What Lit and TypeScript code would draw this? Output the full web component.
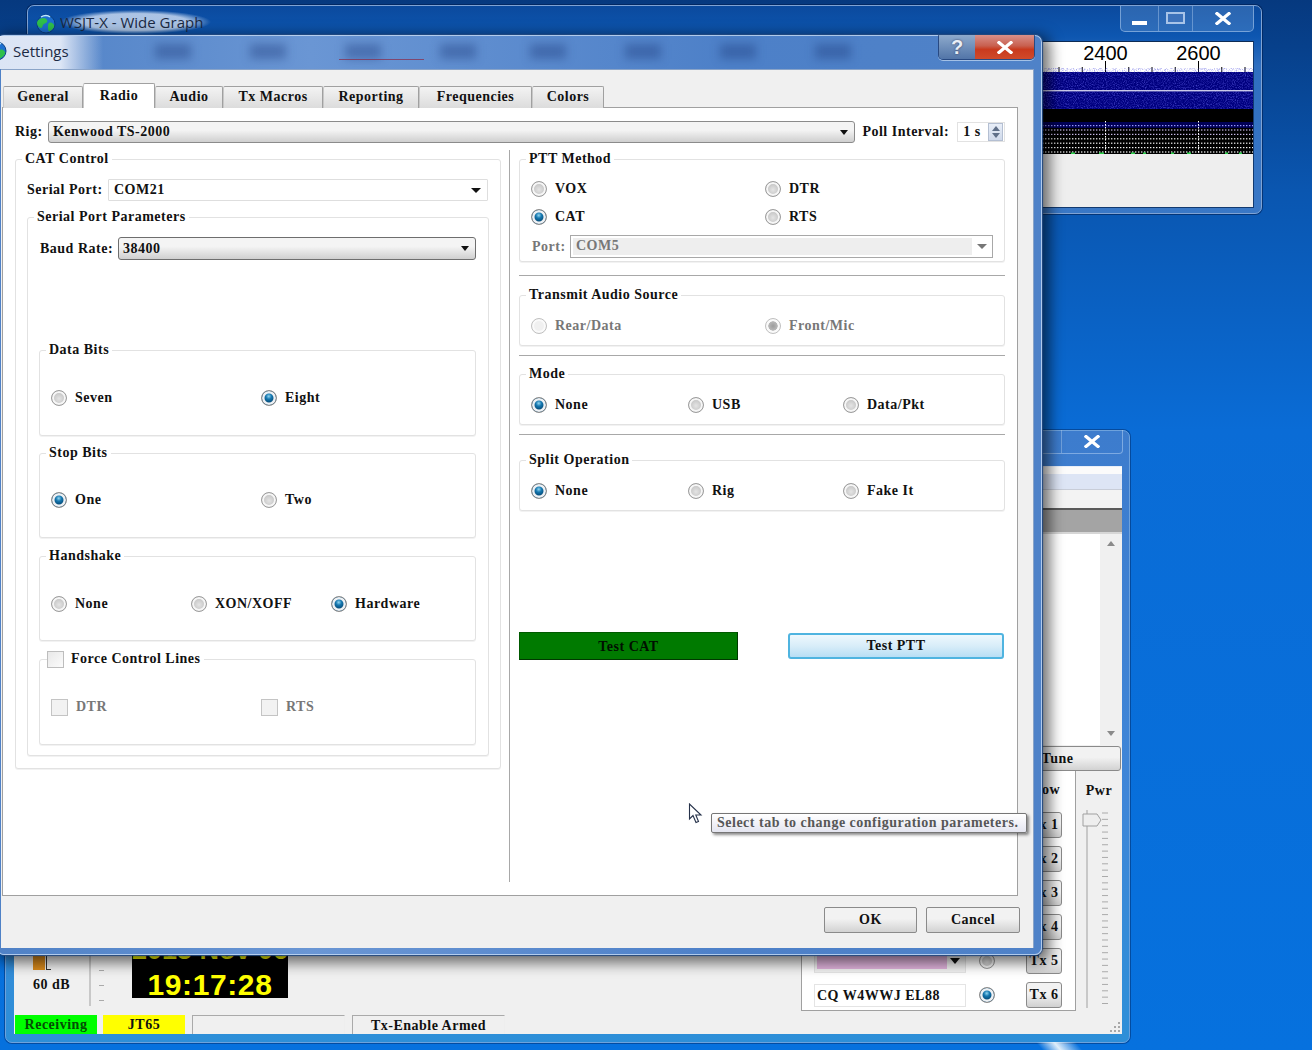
import { LitElement, html, css, svg } from "lit";
import { customElement } from "lit/decorators.js";

const radio = (label: string, on = false, dis = false) => html`
  <label class="opt ${dis ? "dis" : ""}"><i class="radio ${on ? "on" : ""}"></i><span>${label}</span></label>`;
const check = (label: string, dis = false) => html`
  <label class="opt ${dis ? "dis" : ""}"><i class="check"></i><span>${label}</span></label>`;
const globe = svg`<svg class="globe" width="20" height="20" viewBox="0 0 20 20"><circle cx="10" cy="10" r="9" fill="#1c6fd0" stroke="#0c3f80"/><path d="M4 5c3-2 6-1 7 1s-1 3-3 4-1 4-3 4-4-3-4-5 1-3 3-4zM13 9c2-1 4 0 5 2s-2 5-4 6-2-2-2-4 0-3 1-4z" fill="#2fc04a"/><path d="M5 3c3-2 7-2 9 0" fill="none" stroke="#bfe8ff" stroke-width="1.5"/></svg>`;
const closeX = svg`<svg width="16" height="13" viewBox="0 0 16 13"><path d="M2 1.5 L14 11.5 M14 1.5 L2 11.5" stroke="#fff" stroke-width="3.2" stroke-linecap="square" fill="none"/></svg>`;
const tabs: [string, number, boolean][] = [
  ["General", 80, false], ["Radio", 72, true], ["Audio", 68, false], ["Tx Macros", 100, false],
  ["Reporting", 96, false], ["Frequencies", 113, false], ["Colors", 72, false],
];
const ghosts = [170, 265, 360, 455, 545, 640, 735, 830];

@customElement("app-root")
export class AppRoot extends LitElement {
  static styles = css`
    :host { display: block; width: 1312px; height: 1050px; overflow: hidden; position: relative;
      font: bold 14px/16px "Liberation Serif", serif; letter-spacing: .5px; color: #111; white-space: nowrap;
      background: linear-gradient(180deg, #06397f 0, #0a56b0 190px, #0a6cd6 430px, #0671de 100%); }
    .win { position: absolute; box-sizing: border-box; border-radius: 7px; }
    .sans { font-family: "Open Sans", "Liberation Sans", sans-serif; font-weight: 400; letter-spacing: 0; }

    /* wide graph */
    .wide { left: 27px; top: 5px; width: 1235px; height: 209px; padding: 35px 7px 5px 7px;
      background: linear-gradient(180deg, #0b4a9e, #0d56b0 30px, #2f6fc0 60px, #3a78c6);
      border: 1px solid #7fa3d4; box-shadow: 0 0 0 1px rgba(0,30,80,.6); display: flex; flex-direction: column; }
    .wide .tbar { display: flex; align-items: center; gap: 4px; height: 35px; margin: -35px 0 0 0; color: #1b2a44; font-size: 15px; padding-left: 1px; }
    .glow { background: radial-gradient(closest-side, rgba(225,235,250,.75) 70%, rgba(200,220,250,0)); padding: 4px 8px 4px 0; margin-top: -3px; }
    .wctl { margin-left: auto; margin-top: -10px; margin-right: 0; display: flex; height: 25px; border: 1px solid rgba(190,215,245,.5); border-top: 0; border-radius: 0 0 5px 5px; background: rgba(120,165,220,.3); }
    .wctl b { display: flex; align-items: center; justify-content: center; border-right: 1px solid rgba(190,215,245,.4); }
    .wctl b:last-child { border-right: 0; }
    .wb1 { width: 37px; } .wb2 { width: 33px; } .wb3 { width: 60px; }
    .wb1::after { content: ""; width: 15px; height: 4px; margin-top: 10px; background: #fff; }
    .wb2::after { content: ""; width: 15px; height: 8px; border: 2px solid #a8c4e8; background: rgba(70,120,190,.7); }
    .wclient { flex: 1; background: #eeeeee; border: 1px solid #123a70; border-top: 1px solid #0d2b55; display: flex; justify-content: flex-end; overflow: hidden; }
    .fall { display: block; align-self: flex-start; }
    .fall text { font-weight: 400; letter-spacing: 0; }

    /* main */
    .main { left: 5px; top: 430px; width: 1125px; height: 613px; padding: 35px 7px 8px 8px;
      background: linear-gradient(180deg, #3d7ccd, #3f86d8 60%, #2d8fd8);
      border: 1px solid #6ea2dc; box-shadow: 0 0 0 1px rgba(0,40,100,.5); display: flex; flex-direction: column; }
    .mtop { height: 0; display: flex; justify-content: flex-end; }
    .mctl { margin: -36px -1px 0 0; height: 23px; display: flex; border: 1px solid rgba(190,215,245,.5); border-top: 0; border-radius: 0 0 4px 4px; }
    .mctl b { display: flex; align-items: center; justify-content: center; }
    .mb2 { width: 50px; border-right: 1px solid rgba(190,215,245,.4); } .mb3 { width: 60px; }
    .mclient { flex: 1; background: #f0f0f0; display: flex; flex-direction: column; border-top: 1px solid #e8eef8; min-height: 0; }
    .s1 { height: 7px; background: #fbfbfb; } .s2 { height: 15px; background: #dde5f5; border-bottom: 1px solid #c8cdd8; }
    .s3 { height: 18px; background: #f3f3f3; border-bottom: 2px solid #5a5a5a; }
    .s4 { height: 22px; background: #a4a4a4; border-bottom: 2px solid #d6d6d6; }
    .list { height: 211px; background: #fff; display: flex; justify-content: flex-end; }
    .sb { width: 22px; background: #f0f0f0; display: flex; flex-direction: column; justify-content: space-between; align-items: center; padding: 7px 0 9px; box-sizing: border-box; }
    .ua, .da { display: block; width: 0; height: 0; border: 4px solid transparent; }
    .ua { border-bottom: 5px solid #8a8a8a; border-top: 0; } .da { border-top: 5px solid #8a8a8a; border-bottom: 0; }
    .tune { height: 25px; margin: 1px 1px 0 500px; border: 1px solid #8a8a8a; border-radius: 3px; box-sizing: border-box;
      background: linear-gradient(#f2f2f2 45%, #d2d2d2); display: flex; align-items: center; justify-content: center; }
    .tune span { margin-left: 480px; }
    .lower { flex: 1; display: flex; min-height: 0; }
    .lleft { flex: 1; display: flex; align-items: flex-end; padding: 0 0 10px 19px; }
    .meter { width: 56px; display: flex; flex-direction: column; align-items: flex-start; }
    .mbar { display: block; width: 12px; height: 14px; background: #d98a1c; margin-bottom: 7px; position: relative; }
    .mbar::after { content: ""; position: absolute; left: 13px; top: 0; width: 4px; height: 13px; border-left: 1px solid #333; border-bottom: 1px solid #333; }
    .db { margin-bottom: 13px; }
    .vl { display: block; width: 2px; height: 56px; background: #c8c8c8; margin-right: 8px; }
    .tk { display: flex; flex-direction: column; gap: 14px; width: 33px; margin-bottom: 5px; }
    .tk i { display: block; width: 5px; height: 1px; background: #aaa; }
    .clock { width: 156px; height: 62px; background: #000; color: #ffff00; font: bold 30px/26px "Liberation Sans", sans-serif; letter-spacing: .6px; text-align: center; margin-bottom: 8px; display: flex; flex-direction: column; justify-content: flex-end; }
    .clock span { display: block; }
    .clock .date { font-size: 27px; line-height: 28px; margin-bottom: 8px; letter-spacing: 0; }
    .txg { width: 275px; height: 240px; box-sizing: border-box; background: #fff; border: 1px solid #a0a0a0; border-top: 0; padding-right: 13px; display: flex; flex-direction: column; flex-shrink: 0; }
    .txg .hd { height: 37px; flex-shrink: 0; text-align: right; padding: 11px 2px 0 0; box-sizing: border-box; }
    .txr { height: 34px; display: flex; align-items: center; justify-content: flex-end; flex-shrink: 0; }
    .txr .radio { margin: 0 31px 0 13px; }
    .inp { width: 152px; height: 23px; border: 1px solid #e4e4e4; box-sizing: border-box; padding: 3px 0 0 2px; background: #fff; }
    .lil { display: flex; align-items: center; justify-content: space-between; background: #f2f2f2; padding: 0 5px 0 2px; }
    .lil b { display: block; width: 130px; height: 15px; background: #e2b4de; }
    .lil::after { content: ""; width: 0; height: 0; border: 5px solid transparent; border-top: 6px solid #111; border-bottom: 0; }
    .txb { width: 36px; height: 26px; border: 1px solid #8a8a8a; border-radius: 3px; box-sizing: border-box;
      background: linear-gradient(#f2f2f2 45%, #d0d0d0); text-align: center; line-height: 24px; }
    .pwr { width: 46px; flex-shrink: 0; padding-top: 12px; text-align: center; display: flex; flex-direction: column; align-items: center; }
    .pwr svg { margin-top: 9px; }
    .status { display: flex; gap: 6px; height: 19px; padding-left: 1px; margin-top: -1px; align-items: stretch; }
    .st { width: 82px; text-align: center; box-sizing: border-box; line-height: 19px; }
    .green { background: #00ff00; color: #044d04; } .yellow { background: #ffff00; }
    .sunk { width: 153px; border-top: 1px solid #aaa; border-left: 1px solid #aaa; border-right: 1px solid #eee; margin-left: 1px; }
    .grip { margin: auto 0 0 auto; }

    /* dialog */
    .dlg { left: -3px; top: 35px; width: 1045px; height: 920px; padding: 33px 7px 0 3px;
      background: linear-gradient(90deg, #4f81c6, #6a96d4 30%, #4d80c8 70%, #4f82c8);
      border: 1px solid rgba(200,220,245,.8); box-shadow: 0 0 1px 1px #234a80, 4px 4px 14px 4px rgba(0,0,0,.55); }
    .dtitle { height: 33px; margin: -33px 0 0 0; display: flex; align-items: flex-start; position: relative; }
    .dtitle .t { display: flex; align-items: center; gap: 6px; font-size: 15px; color: #1b2a44; height: 30px; padding-bottom: 3px; margin-left: -4px; padding-right: 34px; overflow: hidden;
      background: linear-gradient(90deg, rgba(235,240,250,.9) 60%, rgba(235,240,250,0)); position: relative; }
    .dtitle .t svg { margin-left: -10px; }
    .blur { position: absolute; top: 8px; height: 15px; width: 36px; background: rgba(25,55,120,.38); filter: blur(5px); }
    .redl { position: absolute; left: 338px; top: 23px; width: 85px; height: 1px; background: rgba(140,40,70,.7); filter: blur(.6px); }
    .dbtns { position: absolute; right: -1px; top: -1px; height: 24px; display: flex; border: 1px solid rgba(25,50,100,.7); border-top: 0; border-radius: 0 0 5px 5px; overflow: hidden; box-shadow: 0 1px 0 rgba(220,235,250,.6); }
    .qb { width: 36px; display: flex; align-items: center; justify-content: center; background: linear-gradient(#8eaacc, #6f8fba 50%, #5275a8); color: #e8eef6; font: bold 20px/20px "Liberation Sans", sans-serif; letter-spacing: 0; text-shadow: 0 0 2px #335; }
    .xb { width: 59px; display: flex; align-items: center; justify-content: center; background: linear-gradient(#d9908a, #c8604f 45%, #c93a1e 60%, #d04a2a); }
    .client { height: 879px; background: #f0f0f0; display: flex; flex-direction: column; padding: 13px 15px 0 1px; box-sizing: border-box; border: 1px solid #8aa4c8; border-width: 1px 1px 0 0; }
    .tabs { display: flex; height: 25px; align-items: flex-end; padding-left: 1px; position: relative; z-index: 1; margin-bottom: -1px; flex-shrink: 0; }
    .tab { box-sizing: border-box; height: 22px; border: 1px solid #a0a0a0; border-bottom: 0; text-align: center; line-height: 20px;
      background: linear-gradient(#f3f3f3, #dcdcdc); border-radius: 2px 2px 0 0; border-left-color: #c8c8c8; }
    .tab.sel { height: 25px; background: #fff; line-height: 24px; }
    .pane { height: 789px; box-sizing: border-box; background: #fff; border: 1px solid #a0a0a0; padding: 12px 12px 0 12px; flex-shrink: 0; }
    .rigrow { display: flex; height: 22px; align-items: center; padding-top: 1px; margin-bottom: -1px; }
    .rigrow .lbl { width: 33px; }
    .cb { box-sizing: border-box; display: flex; align-items: center; justify-content: space-between; padding: 0 5px 0 4px; }
    .cb::after { content: ""; width: 0; height: 0; border: 4px solid transparent; border-top: 5px solid #111; border-bottom: 0; flex-shrink: 0; margin-right: 1px; }
    .flat { border: 1px solid #dedede; background: #fff; border-radius: 1px; padding-left: 5px; }
    .flat::after { border-width: 5px; border-bottom: 0; }
    .raised { border: 1px solid #8b8b8b; border-radius: 3px; background: linear-gradient(#f4f4f4 40%, #cfcfcf); }
    .dark { border-color: #6e6e6e; }
    .rig { width: 810px; height: 22px; margin-right: 7px; }
    .spin { width: 48px; height: 20px; border: 1px solid #e2e2e2; box-sizing: border-box; display: flex; justify-content: space-between; margin-left: 8px; padding: 0 1px 0 5px; line-height: 18px; }
    .sbtn { width: 15px; display: flex; flex-direction: column; align-items: center; justify-content: space-around; background: linear-gradient(#e8eef8, #cfd9ea); border: 1px solid #b4bfd2; padding: 1px 0; box-sizing: border-box; }
    .sbtn .ua { border-bottom-color: #5f6f88; } .sbtn .da { border-top-color: #5f6f88; }
    .cols { display: grid; grid-template-columns: 486px 18px 486px; }
    .sep { display: block; background: #a8a8a8; height: 732px; margin: 8px 9px 0 8px; width: 1px; box-sizing: border-box; }
    .colr { display: flex; flex-direction: column; }
    .group { border: 1px solid #e2e2e2; border-radius: 3px; box-sizing: border-box; background: #fff; box-shadow: 0 1px 0 #f2f2f2; }
    .lg { display: block; width: max-content; height: 16px; margin: -9px 0 0 -5px; padding: 0 3px; background: #fff; }
    .lgc { display: flex; align-items: center; gap: 7px; margin-left: -4px; padding-left: 0; }
    .cat { margin-top: 17px; height: 610px; padding: 0 11px; }
    .row { display: flex; align-items: center; }
    .serial { margin-top: 12px; height: 22px; }
    .serial .lbl { width: 81px; }
    .serial .cb { width: 380px; height: 22px; }
    .spp { margin-top: 16px; height: 539px; padding: 0 11px; }
    .baud { margin-top: 12px; height: 23px; padding-left: 1px; }
    .baud .lbl { width: 78px; }
    .baud .cb { width: 358px; height: 23px; }
    .sub { height: 86px; width: 437px; padding-left: 11px; }
    .sd { margin-top: 90px; } .ss { margin-top: 17px; height: 85px; } .sh { margin-top: 18px; height: 85px; } .sf { margin-top: 18px; }
    .g2 { display: grid; grid-template-columns: 210px 210px; }
    .g3 { display: grid; grid-template-columns: 140px 140px 140px; }
    .m32 { margin-top: 32px; } .m31 { margin-top: 31px; }
    .opt { display: flex; align-items: center; height: 16px; gap: 8px; }
    .dis { color: #777; }
    .radio { display: block; width: 16px; height: 16px; box-sizing: border-box; border-radius: 50%; border: 1px solid #9c9c9c; flex-shrink: 0;
      background: radial-gradient(circle at 50% 55%, #e4e4e4, #b0b0b0); box-shadow: inset 0 0 0 2px #f6f6f6; }
    .radio.on { background: radial-gradient(circle at 48% 38%, #8fd4f0 0, #1678b0 25%, #044a78 55%); border-color: #8a8a8a; box-shadow: inset 0 0 0 2.5px #eef1f4; }
    .dis .radio { border-color: #c0c0c0; background: #f0f0f0; box-shadow: inset 0 0 0 2px #fafafa; }
    .dis .radio.on { background: radial-gradient(circle, #9c9c9c 0, #b8b8b8 45%, #f2f2f2 50%); }
    .check { display: block; width: 17px; height: 17px; box-sizing: border-box; border: 1px solid #bdbdbd; background: linear-gradient(135deg, #e8e8e8, #fbfbfb); flex-shrink: 0; }
    .dis .check { background: #f2f2f2; border-color: #c4c4c4; }
    .ptt { margin-top: 17px; height: 103px; padding-left: 11px; }
    .gp { display: grid; grid-template-columns: 234px 234px; }
    .m15 { margin-top: 15px; } .m14 { margin-top: 14px; } .m12 { margin-top: 12px; } .m10 { margin-top: 10px; }
    .port { padding-left: 1px; color: #777; }
    .port .lbl { width: 38px; }
    .port .cb { width: 423px; height: 23px; border: 1px solid #a8a8a8; background: #fff; padding: 2px 0 2px 2px; }
    .port .cb::after { border-top: 5px solid #777; border-width: 5px; border-bottom: 0; margin: 0 5px; }
    .port .in { flex: 1; background: #eee; height: 100%; padding-left: 3px; line-height: 15px; }
    .hr { height: 1px; background: #a8a8a8; margin-top: 13px; }
    .mid { height: 51px; padding-left: 11px; }
    .gm { display: grid; grid-template-columns: 157px 155px 100px; }
    .h9 { margin-top: 9px; }
    .mt19 { margin-top: 19px; } .mt18 { margin-top: 18px; } .mt25 { margin-top: 25px; }
    .tests { display: flex; align-items: center; gap: 50px; margin-top: 121px; }
    .tcat { width: 219px; height: 28px; background: #007a00; border: 1px solid #005a00; border-right-color: #003800; border-bottom-color: #003800; box-sizing: border-box; text-align: center; line-height: 27px; color: #001000; }
    .tptt { width: 216px; height: 26px; box-sizing: border-box; border: 2px solid #4fb4e0; border-radius: 3px; background: linear-gradient(#eef8fd, #d8edf9 50%, #b8def4); text-align: center; line-height: 22px; }
    .foot { display: flex; justify-content: flex-end; gap: 9px; margin: 11px -2px 0 0; }
    .btn { height: 26px; box-sizing: border-box; border: 1px solid #8a8a8a; border-radius: 2px; background: linear-gradient(#f2f2f2 45%, #d2d2d2); text-align: center; line-height: 24px; }
    .ok { width: 93px; } .cancel { width: 94px; }
    .tip { position: absolute; left: 711px; top: 813px; height: 20px; width: 316px; box-sizing: border-box; border: 1px solid #767676; border-radius: 2px; background: linear-gradient(#fff, #e4e5f0); color: #575757; padding-left: 5px; line-height: 18px; box-shadow: 2px 2px 3px rgba(0,0,0,.45); }
    .cursor { position: absolute; left: 688px; top: 803px; }
    .streak { position: absolute; left: 1040px; top: 1042px; width: 40px; height: 10px; background: linear-gradient(90deg, transparent, #dfeefa 45%, transparent); transform: skewX(40deg); }
  `;

  private dots() {
    const out = [];
    for (let y = 0; y < 7; y++) {
      const c = y < 1 ? "#9a9aff" : y < 3 ? "#c9b9e8" : "#f2f2f2";
      for (let x = 1; x < 212; x += 3) out.push(svg`<rect x=${x} y=${83 + y * 4.4} width="1.4" height="1.2" fill=${c}/>`);
    }
    return out;
  }

  private ruler() {
    const ticks = [];
    for (let i = 0; i < 9; i++) {
      const x = 18 + i * 23.25;
      const long = i === 2 || i === 6;
      ticks.push(svg`<line x1=${x} x2=${x} y1=${long ? 19 : 25} y2="30" stroke="#000"/>`);
    }
    return ticks;
  }

  private fall() {
    return html`<svg class="fall" width="212" height="112" viewBox="0 0 212 112">
      <defs><filter id="n"><feTurbulence type="fractalNoise" baseFrequency="0.9" numOctaves="2" seed="3"/><feColorMatrix values="0 0 0 0 .1  0 0 0 0 .1  0 0 0 0 .75  0 0 0 1.6 -.7"/></filter></defs>
      <rect width="212" height="30" fill="#fff"/>
      ${this.ruler()}
      <text x="64.5" y="18" font-family="Liberation Sans" font-size="20" text-anchor="middle" fill="#000">2400</text>
      <text x="157.5" y="18" font-family="Liberation Sans" font-size="20" text-anchor="middle" fill="#000">2600</text>
      <rect y="30" width="212" height="37" fill="#00007f"/>
      <rect y="30" width="212" height="37" filter="url(#n)"/>
      <rect y="48" width="212" height="1.4" fill="#c8c8e8"/>
      <rect y="67" width="212" height="45" fill="#000"/>
      <rect y="80" width="212" height="6" fill="#00006a" opacity=".8"/>
      ${this.dots()}
      <line x1="64.5" x2="64.5" y1="79" y2="112" stroke="#fff" stroke-dasharray="1.5 1.5"/>
      <line x1="157.5" x2="157.5" y1="79" y2="112" stroke="#fff" stroke-dasharray="1.5 1.5"/>
      <path d="M30 111.3h4M58 111.3h5M90 111.3h4M102 111.3h3M130 111.3h3M146 111.3h4M184 111.3h3M198 111.3h3" stroke="#28d048" stroke-width="1.4"/>
    </svg>`;
  }

  private slider() {
    const t = [];
    for (let i = 0; i < 31; i++) t.push(svg`<line x1="20" x2="26" y1=${5 + i * 6.35} y2=${5 + i * 6.35} stroke="#aaa"/>`);
    return html`<svg width="34" height="205" viewBox="0 0 34 205">
      <rect x="4" y="2" width="2" height="198" fill="#c8c8c8"/>
      ${t}
      <path d="M1 6h14l4 6-4 6H1z" fill="#eee" stroke="#a0a0a0"/>
    </svg>`;
  }

  render() {
    return html`
      <section class="win wide">
        <div class="tbar">${globe}<span class="sans glow">WSJT-X - Wide Graph</span>
          <div class="wctl"><b class="wb1"></b><b class="wb2"></b><b class="wb3">${closeX}</b></div>
        </div>
        <div class="wclient">${this.fall()}</div>
      </section>

      <section class="win main">
        <div class="mtop"><div class="mctl"><b class="mb2"></b><b class="mb3">${closeX}</b></div></div>
        <div class="mclient">
          <div class="s1"></div><div class="s2"></div><div class="s3"></div><div class="s4"></div>
          <div class="list"><div class="sb"><i class="ua"></i><i class="da"></i></div></div>
          <div class="tune"><span>Tune</span></div>
          <div class="lower">
            <div class="lleft">
              <div class="meter"><i class="mbar"></i><span class="db">60 dB</span></div>
              <i class="vl"></i>
              <div class="tk"><i></i><i></i><i></i></div>
              <div class="clock"><span class="date">2015 Nov 06</span><span>19:17:28</span></div>
            </div>
            <div class="txg">
              <div class="hd">Now</div>
              ${[1, 2, 3, 4].map((n) => html`<div class="txr"><div class="txb">Tx ${n}</div></div>`)}
              <div class="txr"><div class="inp lil"><b></b></div><i class="radio"></i><div class="txb">Tx 5</div></div>
              <div class="txr"><div class="inp">CQ W4WWJ EL88</div><i class="radio on"></i><div class="txb">Tx 6</div></div>
            </div>
            <div class="pwr"><span>Pwr</span>${this.slider()}</div>
          </div>
          <div class="status">
            <div class="st green">Receiving</div><div class="st yellow">JT65</div>
            <div class="st sunk"></div><div class="st sunk">Tx-Enable Armed</div>
            <svg class="grip" width="14" height="14" viewBox="0 0 14 14" fill="#a8a8a8"><rect x="10" y="2" width="2" height="2"/><rect x="6" y="6" width="2" height="2"/><rect x="10" y="6" width="2" height="2"/><rect x="2" y="10" width="2" height="2"/><rect x="6" y="10" width="2" height="2"/><rect x="10" y="10" width="2" height="2"/></svg>
          </div>
        </div>
      </section>

      <section class="win dlg">
        <div class="dtitle">
          ${ghosts.map((x) => html`<i class="blur" style="left:${x - 16}px"></i>`)}
          <i class="redl"></i>
          <div class="t">${globe}<span class="sans">Settings</span></div>
          <div class="dbtns"><div class="qb">?</div><div class="xb">${closeX}</div></div>
        </div>
        <div class="client">
          <div class="tabs">
            ${tabs.map(([t, w, s]) => html`<div class="tab ${s ? "sel" : ""}" style="width:${w}px">${t}</div>`)}
          </div>
          <div class="pane">
            <div class="rigrow">
              <span class="lbl">Rig:</span>
              <div class="cb raised rig">Kenwood TS-2000</div>
              <span>Poll Interval:</span>
              <div class="spin"><span>1 s</span><div class="sbtn"><i class="ua"></i><i class="da"></i></div></div>
            </div>
            <div class="cols">
              <div>
                <div class="group cat">
                  <span class="lg">CAT Control</span>
                  <div class="row serial"><span class="lbl">Serial Port:</span><div class="cb flat">COM21</div></div>
                  <div class="group spp">
                    <span class="lg">Serial Port Parameters</span>
                    <div class="row baud"><span class="lbl">Baud Rate:</span><div class="cb raised dark">38400</div></div>
                    <div class="group sub sd"><span class="lg">Data Bits</span>
                      <div class="g2 m32">${radio("Seven")}${radio("Eight", true)}</div></div>
                    <div class="group sub ss"><span class="lg">Stop Bits</span>
                      <div class="g2 m31">${radio("One", true)}${radio("Two")}</div></div>
                    <div class="group sub sh"><span class="lg">Handshake</span>
                      <div class="g3 m32">${radio("None")}${radio("XON/XOFF")}${radio("Hardware", true)}</div></div>
                    <div class="group sub sf"><span class="lg lgc"><i class="check"></i>Force Control Lines</span>
                      <div class="g2 m32">${check("DTR", true)}${check("RTS", true)}</div></div>
                  </div>
                </div>
              </div>
              <i class="sep"></i>
              <div class="colr">
                <div class="group ptt"><span class="lg">PTT Method</span>
                  <div class="gp m14">${radio("VOX")}${radio("DTR")}</div>
                  <div class="gp m12">${radio("CAT", true)}${radio("RTS")}</div>
                  <div class="row port m10"><span class="lbl">Port:</span><div class="cb"><div class="in">COM5</div></div></div>
                </div>
                <div class="hr"></div>
                <div class="group mid mt19"><span class="lg">Transmit Audio Source</span>
                  <div class="gp m15">${radio("Rear/Data", false, true)}${radio("Front/Mic", true, true)}</div></div>
                <div class="hr h9"></div>
                <div class="group mid mt18"><span class="lg">Mode</span>
                  <div class="gm m15">${radio("None", true)}${radio("USB")}${radio("Data/Pkt")}</div></div>
                <div class="hr h9"></div>
                <div class="group mid mt25"><span class="lg">Split Operation</span>
                  <div class="gm m15">${radio("None", true)}${radio("Rig")}${radio("Fake It")}</div></div>
                <div class="tests"><div class="tcat">Test CAT</div><div class="tptt">Test PTT</div></div>
              </div>
            </div>
          </div>
          <div class="foot"><div class="btn ok">OK</div><div class="btn cancel">Cancel</div></div>
        </div>
      </section>

      <svg class="cursor" width="15" height="21" viewBox="0 0 15 21"><path d="M1.5 1 V16 L5 12.5 L8 19.5 L10.5 18.5 L7.8 12 H13 Z" fill="#fff" stroke="#26324a" stroke-width="1.1"/></svg>
      <div class="tip">Select tab to change configuration parameters.</div>
      <i class="streak"></i>
    `;
  }
}
